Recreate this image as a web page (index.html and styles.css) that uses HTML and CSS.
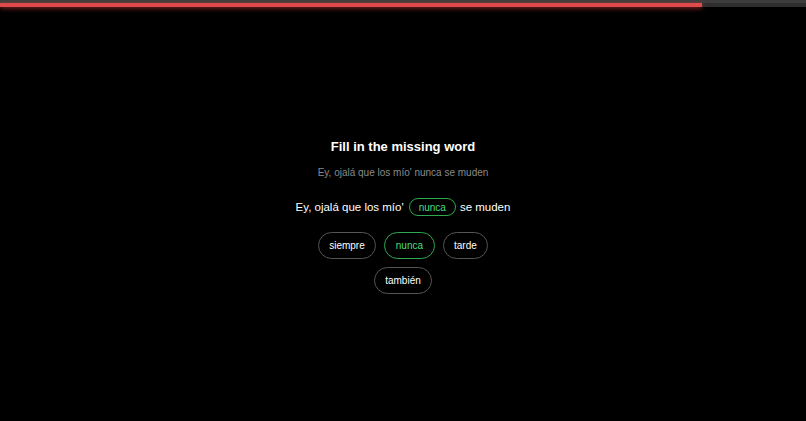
FILE: index.html
```html
<!DOCTYPE html>
<html lang="en">
<head>
<meta charset="utf-8">
<title>Fill in the missing word</title>
<link rel="stylesheet" href="styles.css">
</head>
<body>
<div class="progress">
  <div class="progress-fill" style="width: 87.1%"></div>
</div>
<main class="card">
  <h1 class="title">Fill in the missing word</h1>
  <p class="hint">Ey, ojalá que los mío' nunca se muden</p>
  <p class="sentence">Ey, ojalá que los mío' <span class="blank">nunca</span> se muden</p>
  <div class="options">
    <button class="option">siempre</button>
    <button class="option selected">nunca</button>
    <button class="option">tarde</button>
    <button class="option">también</button>
  </div>
</main>
</body>
</html>
```

FILE: styles.css
```css
html, body {
  margin: 0;
  padding: 0;
  background: #000;
  height: 100%;
}
body {
  font-family: "Liberation Sans", Arial, sans-serif;
  color: #fff;
  display: flex;
  flex-direction: column;
}
.progress {
  height: 4px;
  margin-top: 3px;
  background: #2e2e2e;
  box-shadow: 0 -3px 0 #3d3d3d;
}
.progress-fill {
  height: 100%;
  background: #e04a4a;
  box-shadow: 0 1px 5px rgba(220, 60, 60, 0.7);
}
.card {
  flex: 1;
  display: flex;
  flex-direction: column;
  align-items: center;
  justify-content: center;
  padding-top: 5px;
}
.title {
  margin: 0;
  font-size: 13px;
  font-weight: bold;
}
.hint {
  margin: 13px 0 0;
  font-size: 10px;
  color: #8a8a8a;
}
.sentence {
  margin: 20px 0 0;
  font-size: 11.5px;
  display: flex;
  align-items: center;
  gap: 4px;
}
.blank {
  display: inline-flex;
  align-items: center;
  height: 16px;
  padding: 0 9px;
  margin-left: 1px;
  border: 1px solid #2fa84f;
  border-radius: 9px;
  color: #4ade80;
  font-size: 10px;
}
.options {
  margin-top: 16px;
  width: 180px;
  display: flex;
  flex-wrap: wrap;
  justify-content: center;
  gap: 8px;
}
.option {
  height: 27px;
  padding: 0 10.5px;
  background: transparent;
  border: 1px solid #555;
  border-radius: 14px;
  color: #fff;
  font-family: inherit;
  font-size: 10px;
}
.option.selected {
  border-color: #2fa84f;
  color: #4ade80;
}
```
